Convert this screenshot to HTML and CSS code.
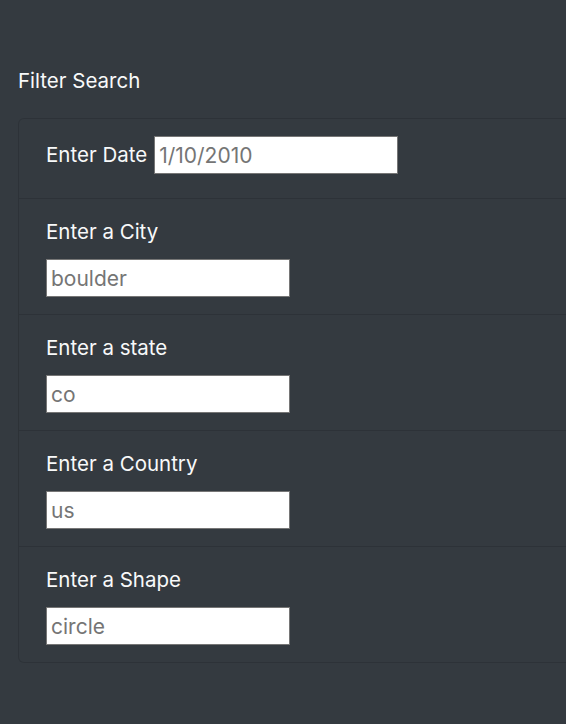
FILE: index.html
```html
<!DOCTYPE html>
<html lang="en">
<head>
<meta charset="utf-8">
<title>Filter Search</title>
<link rel="stylesheet" href="styles.css">
</head>
<body>
<main class="page">
  <h2 class="title">Filter Search</h2>
  <ul class="filters">
    <li class="filter filter-inline">
      <label class="label" for="date">Enter Date</label>
      <input class="field" id="date" type="text" placeholder="1/10/2010">
    </li>
    <li class="filter">
      <label class="label" for="city">Enter a City</label>
      <input class="field" id="city" type="text" placeholder="boulder">
    </li>
    <li class="filter">
      <label class="label" for="state">Enter a state</label>
      <input class="field" id="state" type="text" placeholder="co">
    </li>
    <li class="filter">
      <label class="label" for="country">Enter a Country</label>
      <input class="field" id="country" type="text" placeholder="us">
    </li>
    <li class="filter">
      <label class="label" for="shape">Enter a Shape</label>
      <input class="field" id="shape" type="text" placeholder="circle">
    </li>
  </ul>
</main>
</body>
</html>
```
FILE: styles.css
```css
html, body {
  margin: 0;
  padding: 0;
  background: #343a40;
}
body {
  font-family: Inter, "Liberation Sans", sans-serif;
  color: #f8f9fa;
}
.page {
  padding: 66px 0 0 18px;
}
.title {
  margin: 0 0 22px;
  font-size: 20.5px;
  font-weight: 400;
  line-height: 30px;
}
.filters {
  list-style: none;
  margin: 0;
  padding: 0;
  border: 1px solid rgba(0, 0, 0, 0.125);
  border-right: none;
  border-radius: 6px 0 0 6px;
}
.filter {
  display: flex;
  flex-direction: column;
  align-items: flex-start;
  padding: 21px 0 17px 27px;
  border-top: 1px solid rgba(0, 0, 0, 0.125);
}
.filter:first-child {
  border-top: none;
}
.filter-inline {
  flex-direction: row;
  align-items: center;
  gap: 7px;
  padding: 17px 0 24px 27px;
}
.label {
  font-size: 20.5px;
  line-height: 24px;
  margin-bottom: 15px;
}
.filter-inline .label {
  margin-bottom: 0;
}
.field {
  box-sizing: border-box;
  width: 244px;
  height: 38px;
  margin: 0;
  padding: 0 4px;
  border: 1px solid #767676;
  border-radius: 0;
  background: #fff;
  font-family: Inter, "Liberation Sans", sans-serif;
  font-size: 21px;
  color: #333;
  outline: none;
}
.field::placeholder {
  color: #757575;
}
```
